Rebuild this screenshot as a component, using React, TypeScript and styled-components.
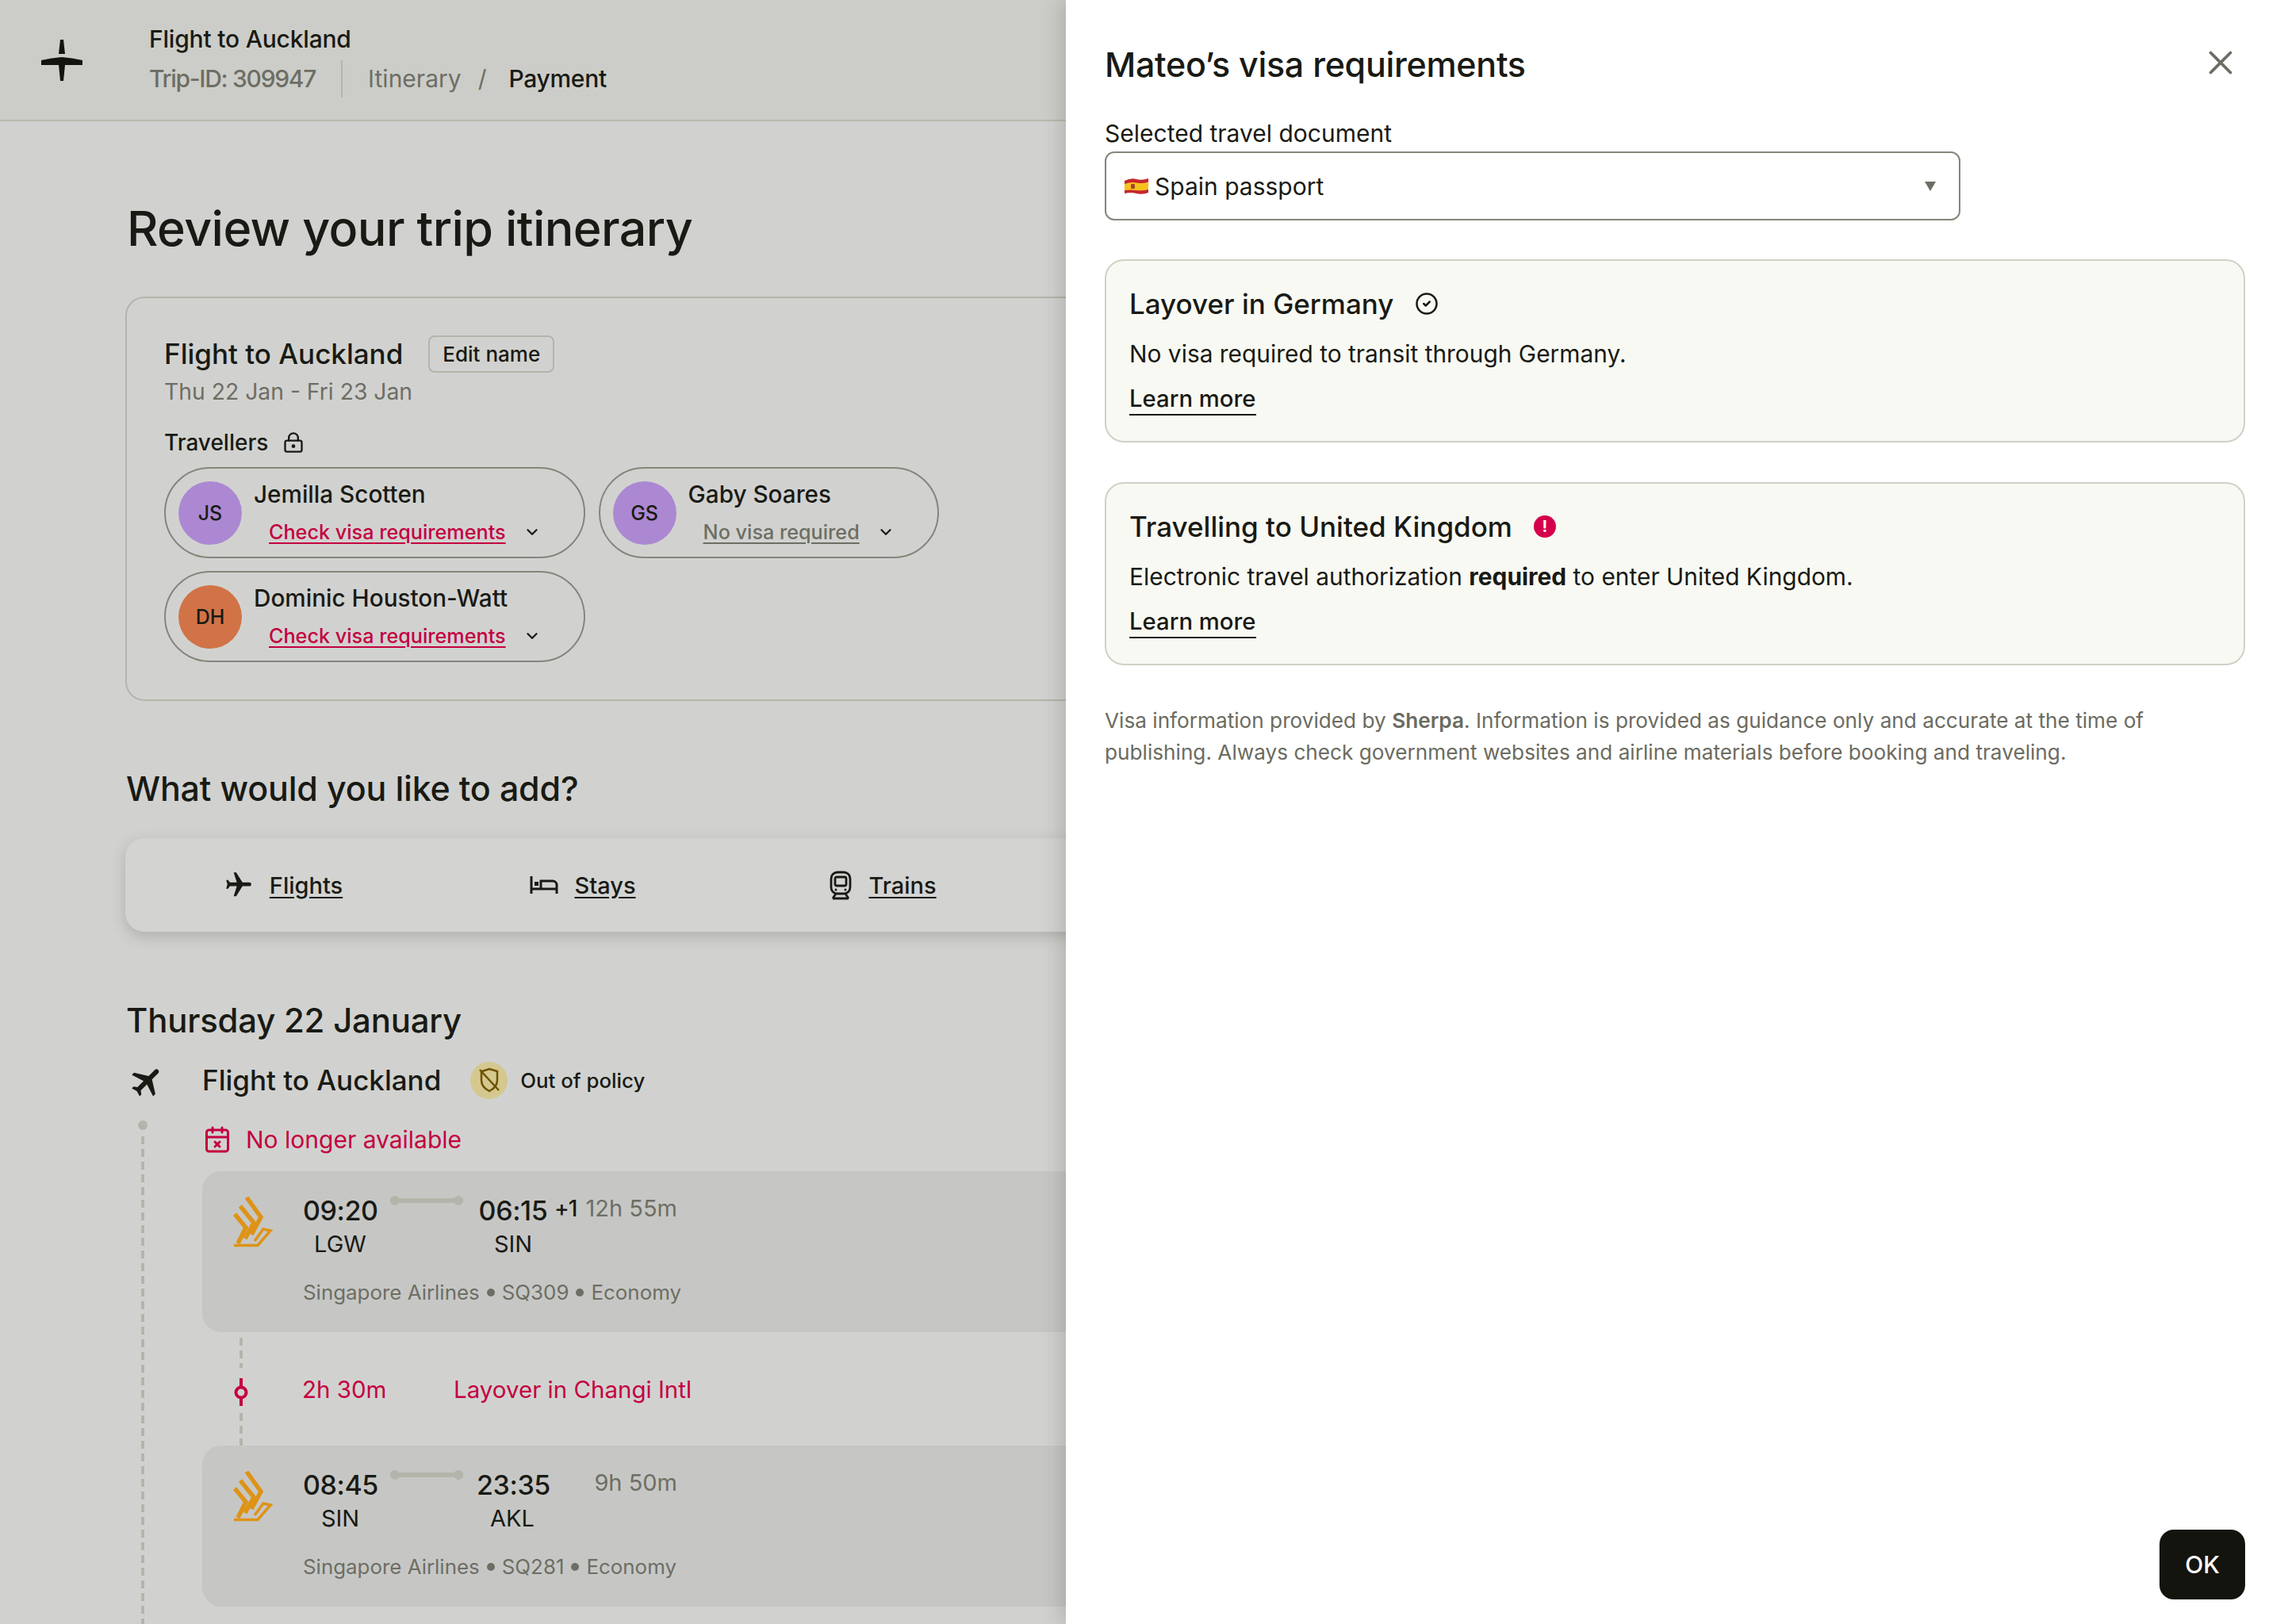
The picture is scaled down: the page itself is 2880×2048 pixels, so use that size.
import styled, { createGlobalStyle } from 'styled-components';
import { CalendarX, ChevronDown, CircleCheck, LockKeyhole, X } from 'lucide-react';

const GlobalStyle = createGlobalStyle`
  html, body {
    margin: 0;
    padding: 0;
    background: #d1d2d0;
  }
  * {
    box-sizing: border-box;
  }
  body {
    font-family: Inter, "Noto Sans", sans-serif;
    color: #191a14;
  }
`;

const Page = styled.div`
  position: relative;
  width: 2880px;
  height: 2048px;
  overflow: hidden;
  background: #d1d2d0;
`;

const TopBar = styled.header`
  display: flex;
  align-items: center;
  height: 153px;
  padding-left: 52px;
  background: #cccdc8;
  border-bottom: 2px solid #b9baaf;
`;

const BarText = styled.div`
  margin-left: 84px;
`;

const BarTitle = styled.div`
  font-size: 30px;
  line-height: 40px;
  font-weight: 500;
  letter-spacing: -0.2px;
`;

const BarCrumbs = styled.div`
  display: flex;
  align-items: center;
  margin-top: 7px;
  font-size: 30px;
  line-height: 40px;
`;

const TripId = styled.span`
  color: #6d6e64;
  font-weight: 500;
  letter-spacing: -1.3px;
`;

const Muted = styled.span`
  color: #6d6e64;
`;

const CrumbDivider = styled.span`
  width: 2px;
  height: 47px;
  margin: 0 32px;
  background: #b4b5aa;
`;

const CrumbSlash = styled.span`
  margin: 0 28px 0 21px;
  color: #6d6e64;
`;

const CrumbCurrent = styled.span`
  font-weight: 500;
  letter-spacing: -0.3px;
`;

const Main = styled.main`
  padding: 99px 0 0 158px;
`;

const PageTitle = styled.h1`
  margin: 0 0 50px 2px;
  font-size: 61px;
  line-height: 72px;
  font-weight: 500;
  letter-spacing: -0.6px;
`;

const TripCard = styled.section`
  width: 2400px;
  padding: 47px 47px 47px;
  border: 2px solid #b4b5aa;
  border-radius: 24px;
`;

const TripTitleRow = styled.div`
  display: flex;
  align-items: center;
  gap: 32px;
  height: 47px;
`;

const TripTitle = styled.h2`
  margin: 0;
  font-size: 35px;
  line-height: 47px;
  font-weight: 500;
`;

const EditButton = styled.span`
  display: flex;
  align-items: center;
  height: 47px;
  padding: 0 16px;
  border: 2px solid #b4b5aa;
  border-radius: 8px;
  font-size: 26px;
  font-weight: 500;
`;

const TripDates = styled.div`
  margin-top: 6px;
  font-size: 28.300px;
  line-height: 36px;
  color: #6d6e64;
`;

const TravellersLabel = styled.div`
  display: flex;
  align-items: center;
  gap: 18px;
  margin: 28px 0 13px;
  font-size: 28px;
  line-height: 36px;
  font-weight: 500;
`;

const Pills = styled.div`
  display: flex;
  flex-wrap: wrap;
  gap: 16px 17px;
  width: 1000px;
`;

const Pill = styled.div`
  display: flex;
  height: 115px;
  padding: 14px 54px 0 16px;
  border: 2px solid #85867a;
  border-radius: 58px;
`;

const Avatar = styled.div<{ $bg: string }>`
  display: flex;
  align-items: center;
  justify-content: center;
  width: 80px;
  height: 80px;
  margin-top: 2px;
  border-radius: 50%;
  background: ${(p) => p.$bg};
  font-size: 25px;
  font-weight: 500;
`;

const PillText = styled.div`
  margin-left: 15px;
`;

const PillName = styled.div`
  font-size: 29.700px;
  line-height: 36px;
  font-weight: 500;
`;

const PillStatus = styled.div`
  display: flex;
  align-items: center;
  gap: 22px;
  margin: 12px 0 0 19px;
  line-height: 36px;
`;

const StatusLink = styled.span<{ $alert?: boolean }>`
  font-size: 25.200px;
  font-weight: 500;
  text-decoration: underline;
  text-underline-offset: 4px;
  color: ${(p) => (p.$alert ? '#c4003f' : '#6d6e64')};
`;

const SectionTitle = styled.h2`
  margin: 82px 0 35px 1px;
  font-size: 43px;
  line-height: 56px;
  font-weight: 500;
  letter-spacing: -0.2px;
`;

const AddBar = styled.div`
  display: grid;
  grid-template-columns: repeat(5, 378px);
  align-items: center;
  width: 2400px;
  height: 118px;
  padding-left: 10px;
  border-radius: 24px;
  background: #d3d4d2;
  box-shadow: 0 6px 18px rgba(60, 60, 50, 0.22);
`;

const AddItem = styled.div`
  display: flex;
  align-items: center;
  justify-content: center;
  gap: 20px;
  font-size: 29px;
  font-weight: 500;
  text-decoration: underline;
  text-underline-offset: 4px;
`;

const DayTitle = styled(SectionTitle)`
  margin: 84px 0 23px 1px;
  font-size: 41.900px;
`;

const Timeline = styled.div`
  display: grid;
  grid-template-columns: 97px 1fr;
  width: 2400px;
`;

const PlaneSlot = styled.div`
  padding: 2px 0 0 4px;
`;

const LegHead = styled.div`
  display: flex;
  align-items: center;
  height: 48px;
`;

const LegTitle = styled.div`
  font-size: 35px;
  line-height: 48px;
  font-weight: 500;
`;

const PolicyBadge = styled.div`
  display: flex;
  align-items: center;
  justify-content: center;
  width: 47px;
  height: 47px;
  margin: 0 16px 0 37px;
  border-radius: 50%;
  background: #d4c88f;
`;

const PolicyText = styled.div`
  font-size: 25.800px;
  font-weight: 500;
`;

const Rail = styled.div`
  display: flex;
  flex-direction: column;
  padding: 21px 0 0 16px;
`;

const RailDot = styled.div`
  width: 12px;
  height: 12px;
  border-radius: 50%;
  background: #b4b5aa;
`;

const Dashes = styled.div`
  width: 4px;
  background: repeating-linear-gradient(to bottom, #b4b5aa 0 10px, transparent 10px 16px);
`;

const RailDashes = styled(Dashes)`
  flex: 1;
  margin: 8px 0 0 4px;
`;

const LegBody = styled.div`
  padding: 25px 0 40px;
`;

const Notice = styled.div`
  display: flex;
  align-items: center;
  gap: 18px;
  height: 40px;
  margin-bottom: 20px;
  padding-left: 1px;
  font-size: 30px;
  color: #c4003f;
`;

const SegmentCard = styled.div`
  display: flex;
  height: 203px;
  padding: 30px 0 0 39px;
  border-radius: 24px;
  background: #c6c7c5;
`;

const AirlineSlot = styled.div`
  width: 88px;
  padding-top: 2px;
`;

const SegmentInfo = styled.div`
  width: 480px;
`;

const Route = styled.div`
  display: flex;
`;

const Stop = styled.div<{ $width: number }>`
  width: ${(p) => p.$width}px;
  text-align: center;
`;

const StopTime = styled.div`
  font-size: 34px;
  line-height: 40px;
  font-weight: 500;
  letter-spacing: -0.4px;
  white-space: nowrap;
`;

const StopCode = styled.div`
  margin-top: 4px;
  font-size: 29px;
  line-height: 36px;
`;

const RouteLine = styled.div<{ $after: number }>`
  display: flex;
  align-items: center;
  width: 92px;
  height: 12px;
  margin: 1px ${(p) => p.$after}px 0 16px;
  background: linear-gradient(#b4b5aa, #b4b5aa) center / 100% 6px no-repeat;

  &::before,
  &::after {
    content: '';
    width: 12px;
    height: 12px;
    border-radius: 50%;
    background: #b4b5aa;
  }
  &::after {
    margin-left: auto;
  }
`;

const NextDay = styled.div`
  margin: 0 0 0 8px;
  font-size: 28px;
  line-height: 34px;
  font-weight: 500;
  letter-spacing: -1px;
`;

const Duration = styled.div`
  margin: -1px 0 0 auto;
  padding-right: 8px;
  font-size: 29px;
  line-height: 36px;
  color: #6d6e64;
`;

const Carrier = styled.div`
  display: flex;
  align-items: center;
  margin-top: 25px;
  font-size: 25.900px;
  line-height: 36px;
  color: #6d6e64;
  white-space: nowrap;
`;

const CarrierDot = styled.span`
  width: 10px;
  height: 10px;
  margin: 0 9px;
  border-radius: 50%;
  background: #6d6e64;
`;

const LayoverRow = styled.div`
  display: flex;
  align-items: center;
  height: 143px;
  padding-left: 39px;
  font-size: 29.500px;
  color: #c4003f;
`;

const LayoverRail = styled.div`
  display: flex;
  flex-direction: column;
  align-items: center;
  width: 20px;
  height: 143px;
  margin-right: 67px;
  padding-top: 7px;
`;

const LayoverDashTop = styled(Dashes)`
  height: 38px;
  margin-bottom: 13px;
`;

const LayoverDashBottom = styled(Dashes)`
  flex: 1;
  margin-top: 9px;
`;

const LayoverTime = styled.div`
  width: 191px;
`;

const Drawer = styled.aside`
  position: absolute;
  top: 0;
  right: 0;
  bottom: 0;
  display: flex;
  flex-direction: column;
  width: 1536px;
  padding: 53px 49px 31px;
  background: #fff;
  box-shadow: -6px 0 24px rgba(40, 40, 30, 0.18);
`;

const DrawerHead = styled.div`
  display: flex;
  align-items: center;
  justify-content: space-between;
  padding-right: 6px;
`;

const DrawerTitle = styled.h2`
  margin: 0;
  font-size: 43px;
  line-height: 56px;
  font-weight: 500;
  letter-spacing: -0.3px;
`;

const CloseSlot = styled.span`
  display: flex;
  margin-top: -4px;
  color: #6d6e64;
`;

const FieldLabel = styled.div`
  margin: 41px 0 5px;
  font-size: 30px;
  line-height: 36px;
`;

const Select = styled.div`
  display: flex;
  align-items: center;
  width: 1079px;
  height: 87px;
  padding: 0 29px 0 23px;
  border: 2px solid #85867a;
  border-radius: 12px;
  font-size: 30px;
`;

const SelectValue = styled.span`
  margin-left: 8px;
`;

const SelectArrow = styled.span`
  width: 0;
  height: 0;
  margin-left: auto;
  border-left: 7px solid transparent;
  border-right: 7px solid transparent;
  border-top: 12px solid #6d6e64;
`;

const VisaCard = styled.section`
  margin-top: 49px;
  padding: 32px 29px 32px;
  border: 2px solid #d0d1c5;
  border-radius: 24px;
  background: #f8f9f3;

  & + & {
    margin-top: 50px;
  }
`;

const VisaTitle = styled.div`
  display: flex;
  align-items: center;
  gap: 27px;
  font-size: 35px;
  line-height: 44px;
  font-weight: 500;
`;

const VisaBody = styled.p`
  margin: 21px 0 19px;
  font-size: 29.900px;
  line-height: 40px;

  b {
    font-weight: 700;
  }
`;

const LearnMore = styled.span`
  display: inline-block;
  height: 39px;
  border-bottom: 2px solid #191a14;
  font-size: 29.300px;
  line-height: 36px;
  font-weight: 500;
`;

const AlertDot = styled.span`
  display: flex;
  align-items: center;
  justify-content: center;
  width: 28px;
  height: 28px;
  border-radius: 50%;
  background: #d5004b;
  color: #fff;
  font-size: 20px;
  font-weight: 700;
`;

const Footnote = styled.p`
  margin: 50px 0 0;
  font-size: 26.200px;
  line-height: 40px;
  color: #6b6b60;

  b {
    font-weight: 600;
  }
`;

const DrawerFoot = styled.div`
  display: flex;
  justify-content: flex-end;
  margin-top: auto;
`;

const OkButton = styled.button`
  width: 108px;
  height: 88px;
  border: 0;
  border-radius: 18px;
  background: #14140e;
  color: #fff;
  font: 500 30px Inter, sans-serif;
`;

const LogoMark = () => (
  <svg width="52" height="52" viewBox="0 0 52 52" fill="#14140e">
    <path d="M24 0h4l2 18h-8z" />
    <path d="M0 26q13-3 26-4 13 1 26 4v6H30l-2 20h-4l-2-20H0z" />
  </svg>
);

const PlaneGlyph = ({ size, rotate }: { size: number; rotate: number }) => (
  <svg width={size} height={size} viewBox="0 0 24 24" fill="#191a14">
    <path
      transform={`rotate(${rotate} 12 12)`}
      d="M21 16v-2l-8-5V3.500c0-.83-.67-1.500-1.500-1.500S10 2.670 10 3.500V9l-8 5v2l8-2.500V19l-2 1.500V22l3.500-1 3.500 1v-1.500L13 19v-5.500l8 2.500z"
    />
  </svg>
);

const BedGlyph = () => (
  <svg width="36" height="26" viewBox="0 0 36 26" fill="none" stroke="#191a14" strokeWidth="3">
    <path d="M2 2v22M2 18h32v6M14 18V8h15a5 5 0 0 1 5 5v5" />
    <rect x="6" y="9" width="5" height="5" fill="#191a14" stroke="none" />
  </svg>
);

const TrainGlyph = () => (
  <svg width="30" height="37" viewBox="0 0 30 37" fill="none" stroke="#191a14" strokeWidth="2.800">
    <rect x="3" y="2" width="24" height="27" rx="8" />
    <rect x="8" y="8" width="14" height="11" rx="2" />
    <path d="M5 35h20M9 29l-4 6M21 29l4 6" />
    <circle cx="9" cy="24" r="1.500" fill="#191a14" stroke="none" />
    <circle cx="21" cy="24" r="1.500" fill="#191a14" stroke="none" />
  </svg>
);

const ShieldGlyph = () => (
  <svg width="28" height="32" viewBox="0 0 28 32" fill="none" stroke="#6e5200" strokeWidth="2.500">
    <path d="M5 5 14 2l10 3v11c0 8-6 12-10 14C10 28 4 24 4 16V5z" />
    <path d="M2 3 26 29" />
  </svg>
);

const AirlineLogo = () => (
  <svg width="50" height="64" viewBox="0 0 50 64" fill="none" stroke="#de9317" strokeWidth="5.500">
    <path d="M17 1 35 26 23 48" />
    <path d="M9 12 26 33 15 53" />
    <path d="M2 22 16 39 6 59" />
    <path d="M1 61.500H31L47 43 38 41 27 56" strokeWidth="3.500" />
  </svg>
);

const SpainFlag = () => (
  <svg width="30" height="22" viewBox="0 0 30 22">
    <path d="M0 4q8-4 15-2t15-1v18q-8 3-15 1T0 20z" fill="#c6262e" />
    <path d="M0 8q8-3 15-1.500t15-1V15q-8 2-15 1T0 16z" fill="#f6c21c" />
    <rect x="8" y="8" width="5" height="6" rx="1" fill="#a5462a" />
  </svg>
);

const LayoverMark = () => (
  <svg width="20" height="35" viewBox="0 0 20 35" fill="none" stroke="#c4003f" strokeWidth="4">
    <path d="M10 0v11M10 25v10" />
    <circle cx="10" cy="18" r="6.500" />
  </svg>
);

const Segment = ({
  from, to, dep, arr, duration, flight, nextDay, arrWidth, lineGap,
}: {
  from: string; to: string; dep: string; arr: string; duration: string; flight: string; nextDay?: boolean; arrWidth: number; lineGap: number;
}) => (
  <SegmentCard>
    <AirlineSlot>
      <AirlineLogo />
    </AirlineSlot>
    <SegmentInfo>
      <Route>
        <Stop $width={94}>
          <StopTime>{dep}</StopTime>
          <StopCode>{from}</StopCode>
        </Stop>
        <RouteLine $after={lineGap} />
        <Stop $width={arrWidth}>
          <StopTime>{arr}</StopTime>
          <StopCode>{to}</StopCode>
        </Stop>
        {nextDay && <NextDay>+1</NextDay>}
        <Duration>{duration}</Duration>
      </Route>
      <Carrier>
        Singapore Airlines<CarrierDot />{flight}<CarrierDot />Economy
      </Carrier>
    </SegmentInfo>
  </SegmentCard>
);

const travellers = [
  { initials: 'JS', name: 'Jemilla Scotten', bg: '#ac88d2', alert: true },
  { initials: 'GS', name: 'Gaby Soares', bg: '#ac88d2', alert: false },
  { initials: 'DH', name: 'Dominic Houston-Watt', bg: '#d17347', alert: true },
];

export default function App() {
  return (
    <Page>
      <GlobalStyle />
      <TopBar>
        <LogoMark />
        <BarText>
          <BarTitle>Flight to Auckland</BarTitle>
          <BarCrumbs>
            <TripId>Trip-ID: 309947</TripId>
            <CrumbDivider />
            <Muted>Itinerary</Muted>
            <CrumbSlash>/</CrumbSlash>
            <CrumbCurrent>Payment</CrumbCurrent>
          </BarCrumbs>
        </BarText>
      </TopBar>

      <Main>
        <PageTitle>Review your trip itinerary</PageTitle>

        <TripCard>
          <TripTitleRow>
            <TripTitle>Flight to Auckland</TripTitle>
            <EditButton>Edit name</EditButton>
          </TripTitleRow>
          <TripDates>Thu 22 Jan - Fri 23 Jan</TripDates>
          <TravellersLabel>
            Travellers <LockKeyhole size={28} strokeWidth={2} />
          </TravellersLabel>
          <Pills>
            {travellers.map((t) => (
              <Pill key={t.initials}>
                <Avatar $bg={t.bg}>{t.initials}</Avatar>
                <PillText>
                  <PillName>{t.name}</PillName>
                  <PillStatus>
                    <StatusLink $alert={t.alert}>{t.alert ? 'Check visa requirements' : 'No visa required'}</StatusLink>
                    <ChevronDown size={22} strokeWidth={2.500} />
                  </PillStatus>
                </PillText>
              </Pill>
            ))}
          </Pills>
        </TripCard>

        <SectionTitle>What would you like to add?</SectionTitle>
        <AddBar>
          <AddItem><PlaneGlyph size={38} rotate={90} />Flights</AddItem>
          <AddItem><BedGlyph />Stays</AddItem>
          <AddItem><TrainGlyph />Trains</AddItem>
        </AddBar>

        <DayTitle>Thursday 22 January</DayTitle>
        <Timeline>
          <PlaneSlot><PlaneGlyph size={48} rotate={45} /></PlaneSlot>
          <LegHead>
            <LegTitle>Flight to Auckland</LegTitle>
            <PolicyBadge><ShieldGlyph /></PolicyBadge>
            <PolicyText>Out of policy</PolicyText>
          </LegHead>
          <Rail>
            <RailDot />
            <RailDashes />
          </Rail>
          <LegBody>
            <Notice><CalendarX size={36} strokeWidth={2} />No longer available</Notice>
            <Segment
              dep="09:20" from="LGW" arr="06:15" to="SIN" arrWidth={88} lineGap={19} nextDay
              duration="12h 55m" flight="SQ309"
            />
            <LayoverRow>
              <LayoverRail>
                <LayoverDashTop />
                <LayoverMark />
                <LayoverDashBottom />
              </LayoverRail>
              <LayoverTime>2h 30m</LayoverTime>
              Layover in Changi Intl
            </LayoverRow>
            <Segment
              dep="08:45" from="SIN" arr="23:35" to="AKL" arrWidth={90} lineGap={17}
              duration="9h 50m" flight="SQ281"
            />
          </LegBody>
        </Timeline>
      </Main>

      <Drawer>
        <DrawerHead>
          <DrawerTitle>Mateo’s visa requirements</DrawerTitle>
          <CloseSlot><X size={50} strokeWidth={1.800} /></CloseSlot>
        </DrawerHead>
        <FieldLabel>Selected travel document</FieldLabel>
        <Select>
          <SpainFlag />
          <SelectValue>Spain passport</SelectValue>
          <SelectArrow />
        </Select>

        <VisaCard>
          <VisaTitle>Layover in Germany <CircleCheck size={30} strokeWidth={2} /></VisaTitle>
          <VisaBody>No visa required to transit through Germany.</VisaBody>
          <LearnMore>Learn more</LearnMore>
        </VisaCard>

        <VisaCard>
          <VisaTitle>Travelling to United Kingdom <AlertDot>!</AlertDot></VisaTitle>
          <VisaBody>Electronic travel authorization <b>required</b> to enter United Kingdom.</VisaBody>
          <LearnMore>Learn more</LearnMore>
        </VisaCard>

        <Footnote>
          Visa information provided by <b>Sherpa</b>. Information is provided as guidance only and accurate at the time of
          publishing. Always check government websites and airline materials before booking and traveling.
        </Footnote>

        <DrawerFoot>
          <OkButton>OK</OkButton>
        </DrawerFoot>
      </Drawer>
    </Page>
  );
}
